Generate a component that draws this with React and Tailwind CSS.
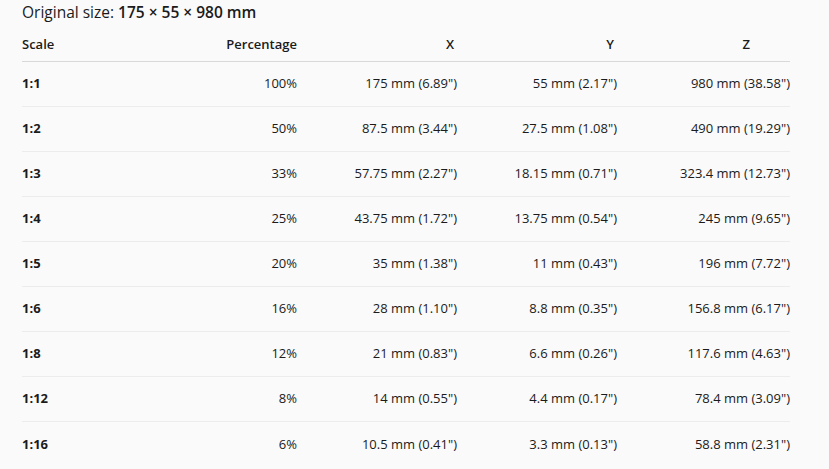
import React from 'react';

const rows = [
  ['1:1', '100%', '175 mm (6.89")', '55 mm (2.17")', '980 mm (38.58")'],
  ['1:2', '50%', '87.5 mm (3.44")', '27.5 mm (1.08")', '490 mm (19.29")'],
  ['1:3', '33%', '57.75 mm (2.27")', '18.15 mm (0.71")', '323.4 mm (12.73")'],
  ['1:4', '25%', '43.75 mm (1.72")', '13.75 mm (0.54")', '245 mm (9.65")'],
  ['1:5', '20%', '35 mm (1.38")', '11 mm (0.43")', '196 mm (7.72")'],
  ['1:6', '16%', '28 mm (1.10")', '8.8 mm (0.35")', '156.8 mm (6.17")'],
  ['1:8', '12%', '21 mm (0.83")', '6.6 mm (0.26")', '117.6 mm (4.63")'],
  ['1:12', '8%', '14 mm (0.55")', '4.4 mm (0.17")', '78.4 mm (3.09")'],
  ['1:16', '6%', '10.5 mm (0.41")', '3.3 mm (0.13")', '58.8 mm (2.31")'],
];

const cols = 'grid grid-cols-[135px_140px_160px_160px_173px]';

const App = () => {
  return (
    <div className="min-h-screen bg-[#fafafa] text-[#1b1b1b] px-[22px] font-['Open_Sans',sans-serif]">
      <p className="h-[25px] leading-[25px] text-[15.5px]">
        Original size: <span className="font-semibold">175 × 55 × 980 mm</span>
      </p>

      <div className="w-[768px] text-[13px]">
        <div className={`${cols} h-[37px] items-center pt-[3px] font-semibold border-b border-[#d9d9d9]`}>
          <span>Scale</span>
          <span className="text-right">Percentage</span>
          <span className="text-right pr-[3px]">X</span>
          <span className="text-right pr-[3px]">Y</span>
          <span className="text-right pr-[40px]">Z</span>
        </div>

        {rows.map((r, i) => (
          <div
            key={r[0]}
            className={`${cols} h-[45px] items-center ${i < rows.length - 1 ? 'border-b border-[#ececec]' : ''}`}
          >
            <span className="font-bold">{r[0]}</span>
            <span className="text-right">{r[1]}</span>
            <span className="text-right">{r[2]}</span>
            <span className="text-right">{r[3]}</span>
            <span className="text-right">{r[4]}</span>
          </div>
        ))}
      </div>
    </div>
  );
};

export default App;
